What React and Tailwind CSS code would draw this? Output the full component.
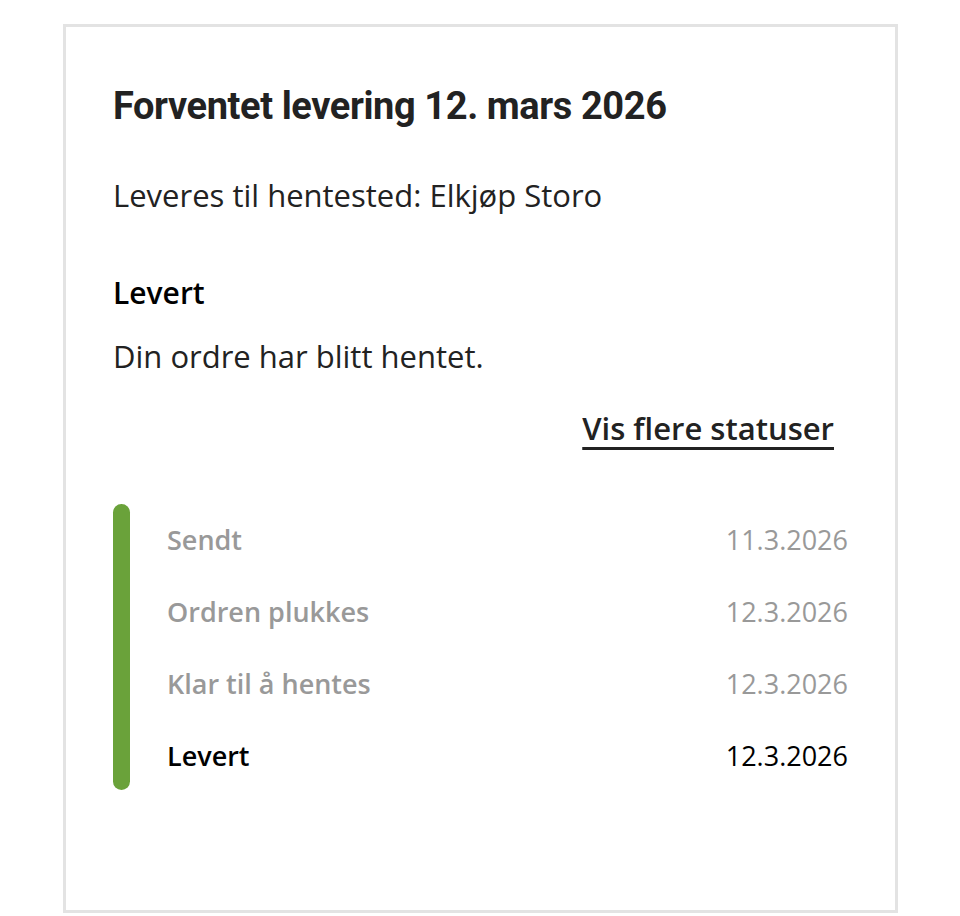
const STEPS = [
  { label: 'Sendt', date: '11.3.2026' },
  { label: 'Ordren plukkes', date: '12.3.2026' },
  { label: 'Klar til å hentes', date: '12.3.2026' },
  { label: 'Levert', date: '12.3.2026', current: true },
];

export default function App() {
  return (
    <div className="min-h-screen bg-white pt-[24px] pl-[63px] font-['Open_Sans',sans-serif]">
      <div className="w-[835px] h-[889px] border-[3px] border-[#e3e3e3] bg-white pl-[47px] pr-[47px] pt-[55px]">
        <h1 className="font-['Roboto',sans-serif] font-bold text-[38px] leading-[48px] tracking-[-0.4px] text-[#222]">
          Forventet levering 12. mars 2026
        </h1>

        <p className="mt-[44px] text-[31px] leading-[42px] text-[#222]">
          Leveres til hentested: Elkjøp Storo
        </p>

        <p className="mt-[56px] text-[30px] leading-[42px] font-semibold text-black">Levert</p>
        <p className="mt-[21px] text-[31px] leading-[42px] text-[#222]">Din ordre har blitt hentet.</p>

        <div className="flex justify-end pr-[14px] mt-[30px]">
          <a href="#" className="text-[31px] leading-[42px] font-semibold text-[#222] underline underline-offset-[7px] decoration-[3px]">
            Vis flere statuser
          </a>
        </div>

        <div className="flex mt-[55px]">
          <div className="w-[17px] h-[286px] rounded-full bg-[#6aa23a]" />
          <div className="flex-1 pl-[37px] pt-[17px] flex flex-col gap-[34px]">
            {STEPS.map((s) => (
              <div
                key={s.label}
                className={`flex justify-between text-[27px] leading-[38px] ${s.current ? 'text-black' : 'text-[#999]'}`}
              >
                <span className="font-semibold">{s.label}</span>
                <span>{s.date}</span>
              </div>
            ))}
          </div>
        </div>
      </div>
    </div>
  );
}
